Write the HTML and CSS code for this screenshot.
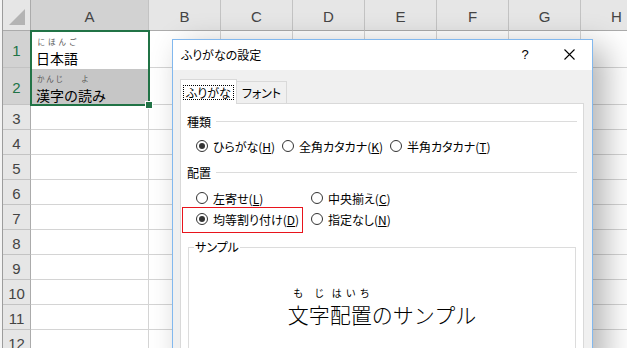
FILE: index.html
```html
<html>
    <head>
        <meta charset="UTF-8">
        <title>ふりがなの設定</title>
        <link rel="stylesheet" href="styles.css">
    </head>

    <body>
        <div class="window">
            <div class="edge"></div>

            <!-- Worksheet -->
            <div class="sheet">
                <div class="corner">
                    <svg width="17" height="17" viewBox="0 0 17 17"><polygon points="16,0 16,16 0,16" fill="#b4b4b4"/></svg>
                </div>
                <div class="colhead sel">A</div>
                <div class="colhead">B</div>
                <div class="colhead">C</div>
                <div class="colhead">D</div>
                <div class="colhead">E</div>
                <div class="colhead">F</div>
                <div class="colhead">G</div>
                <div class="colhead">H</div>

                <div class="rowhead sel">1</div>
                <div class="range">
                    <div class="cell-in a1">
                        <div class="word"><div class="furi"><span>に</span><span>ほ</span><span>ん</span><span>ご</span></div><span class="base">日本語</span></div>
                    </div>
                    <div class="cell-in a2">
                        <div class="word"><div class="furi"><span>か</span><span>ん</span><span>じ</span></div><span class="base">漢字</span></div>
                        <span class="base">の</span>
                        <div class="word"><div class="furi"><span>よ</span></div><span class="base">読</span></div>
                        <span class="base">み</span>
                    </div>
                    <span class="handle"></span>
                </div>
                <div class="cell"></div><div class="cell"></div><div class="cell"></div><div class="cell"></div><div class="cell"></div><div class="cell"></div><div class="cell"></div>

                <div class="rowhead sel">2</div>
                <div class="cell"></div><div class="cell"></div><div class="cell"></div><div class="cell"></div><div class="cell"></div><div class="cell"></div><div class="cell"></div>

                <div class="rowhead">3</div>
                <div class="cell"></div><div class="cell"></div><div class="cell"></div><div class="cell"></div><div class="cell"></div><div class="cell"></div><div class="cell"></div><div class="cell"></div>
                <div class="rowhead">4</div>
                <div class="cell"></div><div class="cell"></div><div class="cell"></div><div class="cell"></div><div class="cell"></div><div class="cell"></div><div class="cell"></div><div class="cell"></div>
                <div class="rowhead">5</div>
                <div class="cell"></div><div class="cell"></div><div class="cell"></div><div class="cell"></div><div class="cell"></div><div class="cell"></div><div class="cell"></div><div class="cell"></div>
                <div class="rowhead">6</div>
                <div class="cell"></div><div class="cell"></div><div class="cell"></div><div class="cell"></div><div class="cell"></div><div class="cell"></div><div class="cell"></div><div class="cell"></div>
                <div class="rowhead">7</div>
                <div class="cell"></div><div class="cell"></div><div class="cell"></div><div class="cell"></div><div class="cell"></div><div class="cell"></div><div class="cell"></div><div class="cell"></div>
                <div class="rowhead">8</div>
                <div class="cell"></div><div class="cell"></div><div class="cell"></div><div class="cell"></div><div class="cell"></div><div class="cell"></div><div class="cell"></div><div class="cell"></div>
                <div class="rowhead">9</div>
                <div class="cell"></div><div class="cell"></div><div class="cell"></div><div class="cell"></div><div class="cell"></div><div class="cell"></div><div class="cell"></div><div class="cell"></div>
                <div class="rowhead">10</div>
                <div class="cell"></div><div class="cell"></div><div class="cell"></div><div class="cell"></div><div class="cell"></div><div class="cell"></div><div class="cell"></div><div class="cell"></div>
                <div class="rowhead">11</div>
                <div class="cell"></div><div class="cell"></div><div class="cell"></div><div class="cell"></div><div class="cell"></div><div class="cell"></div><div class="cell"></div><div class="cell"></div>
                <div class="rowhead">12</div>
                <div class="cell"></div><div class="cell"></div><div class="cell"></div><div class="cell"></div><div class="cell"></div><div class="cell"></div><div class="cell"></div><div class="cell"></div>
            </div>
        </div>

        <!-- Dialog -->
        <div class="dialog">
            <div class="titlebar">
                <div class="title">ふりがなの設定</div>
                <div class="tbtn help">?</div>
                <div class="tbtn close">
                    <svg width="11" height="11" viewBox="0 0 11 11"><path d="M0.5 0.5 L10.5 10.5 M10.5 0.5 L0.5 10.5" stroke="#000" stroke-width="1.1" fill="none"/></svg>
                </div>
            </div>

            <div class="dlg-body">
                <div class="tabs">
                    <div class="tab active"><span class="focus">ふりがな</span></div>
                    <div class="tab">フォント</div>
                </div>

                <div class="panel">
                    <div class="group-title"><span>種類</span><div class="rule"></div></div>
                    <div class="radio-row">
                        <div class="radio w86"><span class="dot on"></span><span>ひらがな(<u>H</u>)</span></div>
                        <div class="radio w108"><span class="dot"></span><span>全角カタカナ(<u>K</u>)</span></div>
                        <div class="radio"><span class="dot"></span><span>半角カタカナ(<u>T</u>)</span></div>
                    </div>

                    <div class="group-title g2"><span>配置</span><div class="rule"></div></div>
                    <div class="radio-row r2">
                        <div class="radio w115"><span class="dot"></span><span>左寄せ(<u>L</u>)</span></div>
                        <div class="radio"><span class="dot"></span><span>中央揃え(<u>C</u>)</span></div>
                    </div>
                    <div class="radio-row r3">
                        <div class="radio w115 marked"><span class="dot on"></span><span>均等割り付け(<u>D</u>)</span></div>
                        <div class="radio"><span class="dot"></span><span>指定なし(<u>N</u>)</span></div>
                    </div>

                    <fieldset class="sample">
                        <legend>サンプル</legend>
                        <div class="sample-line">
                            <div class="word"><div class="furi"><span>も</span></div><span class="base">文</span></div>
                            <div class="word"><div class="furi"><span>じ</span></div><span class="base">字</span></div>
                            <div class="word"><div class="furi"><span>は</span><span>い</span><span>ち</span></div><span class="base">配置</span></div>
                            <span class="base">のサンプル</span>
                        </div>
                    </fieldset>
                </div>
            </div>
        </div>
    </body>
</html>
```

FILE: styles.css
```css
body{
    margin: 0;
    width: 627px;
    height: 348px;
    overflow: hidden;
    position: relative;
    background-color: #fff;
    font-family: "Noto Sans CJK JP", sans-serif;
}

.window{
    display: flex;
}

.edge{
    flex: none;
    width: 3px;
    box-sizing: border-box;
    background-color: #f4f4f4;
    border-right: 1px solid #9c9c9c;
}

/* Worksheet grid */
.sheet{
    flex: none;
    display: grid;
    grid-template-columns: 28px 118px repeat(7, 72px);
    grid-template-rows: 31px 37px 37px repeat(10, 25px);
}

.sheet > div{
    box-sizing: border-box;
}

.corner{
    display: flex;
    align-items: flex-end;
    justify-content: flex-end;
    padding: 0 4px 4px 0;
    background-color: #e6e6e6;
    border-right: 1px solid #ababab;
    border-bottom: 1px solid #ababab;
}

.colhead{
    display: flex;
    align-items: center;
    justify-content: center;
    padding-top: 2px;
    background-color: #e6e6e6;
    border-right: 1px solid #c3c3c3;
    border-bottom: 1px solid #ababab;
    font: 15px "Liberation Sans", sans-serif;
    color: #444;
}

.rowhead{
    display: flex;
    align-items: center;
    justify-content: center;
    padding-top: 2px;
    background-color: #e6e6e6;
    border-right: 1px solid #ababab;
    border-bottom: 1px solid #c3c3c3;
    font: 15px "Liberation Sans", sans-serif;
    color: #444;
}

.colhead.sel, .rowhead.sel{
    background-color: #d2d2d2;
}

.rowhead.sel{
    color: #217346;
}

.cell{
    border-right: 1px solid #d4d4d4;
    border-bottom: 1px solid #d4d4d4;
}

/* Selected range A1:A2 */
.range{
    grid-column: 2;
    grid-row: 2 / span 2;
    margin: -1px;
    position: relative;
    z-index: 1;
    display: flex;
    flex-direction: column;
    border: 2px solid #217346;
}

.cell-in{
    flex: 1;
    display: flex;
    align-items: flex-end;
    padding: 0 0 2px 4px;
    font-size: 14px;
}

.a1{
    background-color: #fff;
}

.a2{
    background-color: #c6c6c6;
    padding-bottom: 0;
}

.handle{
    position: absolute;
    right: -5px;
    bottom: -5px;
    width: 6px;
    height: 6px;
    background-color: #217346;
    border: 1px solid #fff;
}

/* Words with furigana */
.word{
    display: inline-flex;
    flex-direction: column;
}

.furi{
    display: flex;
    justify-content: space-around;
    font-size: 7.5px;
    line-height: 10px;
    margin-bottom: 2px;
    color: #555;
}

.base{
    line-height: 18px;
    color: #000;
}

/* Dialog */
.dialog{
    position: absolute;
    left: 172px;
    top: 39px;
    width: 421px;
    height: 330px;
    box-sizing: border-box;
    border: 1px solid #82b8ee;
    background-color: #f0f0f0;
    box-shadow: 12px 8px 30px rgba(0, 0, 0, 0.3);
    font-size: 12px;
    font-feature-settings: "palt";
    color: #000;
}

.titlebar{
    display: flex;
    align-items: center;
    height: 30px;
    padding: 0 0 1px 8px;
    box-sizing: border-box;
    background-color: #fff;
}

.title{
    flex: 1;
    font-size: 12px;
}

.tbtn{
    display: flex;
    align-items: center;
    justify-content: center;
    height: 100%;
}

.help{
    width: 42px;
    font: 13px "Liberation Sans", sans-serif;
}

.close{
    width: 46px;
}

.dlg-body{
    padding: 9px 8px 0 7px;
}

.tabs{
    display: flex;
    align-items: flex-end;
    height: 24px;
    position: relative;
    z-index: 1;
}

.tab{
    display: flex;
    align-items: center;
    justify-content: center;
    box-sizing: border-box;
    height: 22px;
    width: 50px;
    border: 1px solid #d9d9d9;
    border-bottom: none;
    border-left: none;
}

.tab.active{
    height: 25px;
    width: 57px;
    margin-bottom: -1px;
    border-left: 1px solid #d9d9d9;
    background-color: #fff;
}

.focus{
    padding: 0 2px;
    outline: 1px dotted #000;
    line-height: 13px;
}

.panel{
    height: 260px;
    padding: 9px 6px 0 6px;
    border: 1px solid #d9d9d9;
    background-color: #fff;
}

.group-title{
    display: flex;
    align-items: center;
    gap: 5px;
    height: 16px;
}

.group-title.g2{
    margin-top: 9px;
}

.rule{
    flex: 1;
    height: 1px;
    background-color: #dcdcdc;
}

.radio-row{
    display: flex;
    align-items: center;
    height: 18px;
    margin-top: 8px;
    padding-left: 9px;
}

.radio-row.r2{
    margin-top: 9px;
}

.radio-row.r3{
    margin-top: 3px;
}

.radio{
    display: flex;
    align-items: center;
    gap: 5px;
    height: 18px;
    white-space: nowrap;
    position: relative;
}

.w86{ width: 86px; }
.w108{ width: 108px; }
.w115{ width: 115px; }

.dot{
    flex: none;
    width: 12px;
    height: 12px;
    box-sizing: border-box;
    border: 1px solid #333;
    border-radius: 50%;
    display: flex;
    align-items: center;
    justify-content: center;
}

.dot.on::after{
    content: "";
    width: 6px;
    height: 6px;
    border-radius: 50%;
    background-color: #333;
}

/* red annotation box */
.marked::after{
    content: "";
    position: absolute;
    left: -14px;
    top: -3px;
    width: 121px;
    height: 26px;
    box-sizing: border-box;
    border: 1px solid #e8141c;
}

.sample{
    margin: 11px 0 0 1px;
    width: 388px;
    height: 120px;
    box-sizing: border-box;
    padding: 0 5px;
    border: 1px solid #dcdcdc;
}

.sample legend{
    padding: 0 1px;
    line-height: 16px;
}

.sample-line{
    display: flex;
    justify-content: center;
    align-items: flex-end;
    margin-top: 31px;
    font-feature-settings: normal;
}

.sample-line .base{
    font-size: 21px;
    line-height: 24px;
    font-weight: 300;
}

.sample-line .furi{
    font-size: 10px;
    line-height: 14px;
    color: #000;
}
```
